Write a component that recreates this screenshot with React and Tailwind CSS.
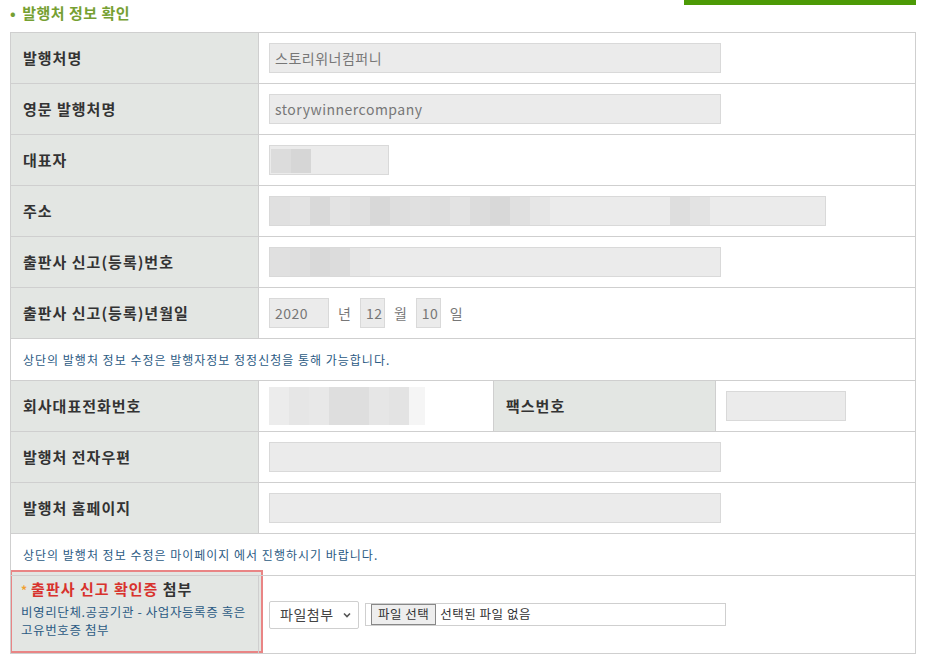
import React from 'react';

const font = { fontFamily: '"Noto Sans CJK KR", "Noto Sans", sans-serif' };

const Label = ({ children }) => (
  <td className="border border-[#cfcfcf] bg-[#e3e6e3] pl-3 text-[15px] font-bold tracking-[1px] text-[#333]">
    {children}
  </td>
);

const TextBox = ({ value = '', w = 'w-[452px]', children }) => (
  <div className={`relative h-[30px] ${w} overflow-hidden border border-[#d9d9d9] bg-[#ebebeb] px-[5px] text-[14px] leading-[28px] tracking-[0.5px] text-[#777]`}>
    {value}
    {children}
  </div>
);

// blurred (masked) text blocks
const Blur = ({ blocks }) => (
  <div className="absolute inset-0 flex">
    {blocks.map((c, i) => (
      <div key={i} className={`h-full w-[20px] ${c}`} />
    ))}
  </div>
);

const Note = ({ children }) => (
  <tr className="h-[42px]">
    <td colSpan={4} className="border border-[#cfcfcf] pl-3 text-[12px] tracking-[1px] text-[#2c5b84]">
      {children}
    </td>
  </tr>
);

export default function App() {
  return (
    <div className="relative h-[657px] w-[933px] overflow-hidden bg-white" style={font}>
      <div className="absolute left-[684px] top-0 h-[5px] w-[232px] bg-[#4c9a06]" />
      <div className="h-[32px] pl-[10px] pt-[2px] text-[15px] font-bold tracking-[0.5px] text-[#76a032]">
        <span className="mr-[6px]">•</span>발행처 정보 확인
      </div>
      <table className="ml-[10px] w-[906px] table-fixed border-collapse">
        <colgroup>
          <col className="w-[248px]" />
          <col className="w-[235px]" />
          <col className="w-[222px]" />
          <col />
        </colgroup>
        <tbody>
          <tr className="h-[51px]">
            <Label>발행처명</Label>
            <td colSpan={3} className="border border-[#cfcfcf] pl-[10px]">
              <TextBox value="스토리위너컴퍼니" />
            </td>
          </tr>
          <tr className="h-[51px]">
            <Label>영문 발행처명</Label>
            <td colSpan={3} className="border border-[#cfcfcf] pl-[10px]">
              <TextBox value="storywinnercompany" />
            </td>
          </tr>
          <tr className="h-[51px]">
            <Label>대표자</Label>
            <td colSpan={3} className="border border-[#cfcfcf] pl-[10px]">
              <TextBox w="w-[120px]">
                <div className="absolute left-[1px] top-[3px] flex h-[24px]">
                  <div className="w-[20px] bg-[#dcdcdc]" />
                  <div className="w-[20px] bg-[#d6d6d6]" />
                </div>
              </TextBox>
            </td>
          </tr>
          <tr className="h-[51px]">
            <Label>주소</Label>
            <td colSpan={3} className="border border-[#cfcfcf] pl-[10px]">
              <TextBox w="w-[557px]">
                <Blur
                  blocks={[
                    'bg-[#e0e0e0]', 'bg-[#e3e3e3]', 'bg-[#d9d9d9]', 'bg-[#e3e3e3]', 'bg-[#e0e0e0]',
                    'bg-[#d8d8d8]', 'bg-[#dedede]', 'bg-[#e0e0e0]', 'bg-[#dedede]', 'bg-[#e3e3e3]',
                    'bg-[#dcdcdc]', 'bg-[#d8d8d8]', 'bg-[#e0e0e0]', 'bg-[#e6e6e6]', 'bg-[#ebebeb]',
                    'bg-[#ebebeb]', 'bg-[#ebebeb]', 'bg-[#ebebeb]', 'bg-[#ebebeb]', 'bg-[#ebebeb]',
                    'bg-[#dedede]', 'bg-[#e3e3e3]',
                  ]}
                />
              </TextBox>
            </td>
          </tr>
          <tr className="h-[51px]">
            <Label>출판사 신고(등록)번호</Label>
            <td colSpan={3} className="border border-[#cfcfcf] pl-[10px]">
              <TextBox>
                <div className="absolute left-0 top-0 flex h-full">
                  <div className="w-[20px] bg-[#e0e0e0]" />
                  <div className="w-[20px] bg-[#dedede]" />
                  <div className="w-[20px] bg-[#d9d9d9]" />
                  <div className="w-[20px] bg-[#dcdcdc]" />
                  <div className="w-[20px] bg-[#e6e6e6]" />
                </div>
              </TextBox>
            </td>
          </tr>
          <tr className="h-[51px]">
            <Label>출판사 신고(등록)년월일</Label>
            <td colSpan={3} className="border border-[#cfcfcf] pl-[10px]">
              <div className="flex items-center text-[14px] text-[#777]">
                <TextBox value="2020" w="w-[60px]" />
                <span className="mx-[9px]">년</span>
                <TextBox value="12" w="w-[25px]" />
                <span className="mx-[9px]">월</span>
                <TextBox value="10" w="w-[25px]" />
                <span className="ml-[9px]">일</span>
              </div>
            </td>
          </tr>
          <Note>상단의 발행처 정보 수정은 발행자정보 정정신청을 통해 가능합니다.</Note>
          <tr className="h-[51px]">
            <Label>회사대표전화번호</Label>
            <td className="border border-[#cfcfcf] pl-[10px]">
              <div className="flex h-[38px]">
                <div className="w-[20px] bg-[#ececec]" />
                <div className="w-[20px] bg-[#e6e6e6]" />
                <div className="w-[20px] bg-[#e8e8e8]" />
                <div className="w-[20px] bg-[#dedede]" />
                <div className="w-[20px] bg-[#dedede]" />
                <div className="w-[20px] bg-[#e6e6e6]" />
                <div className="w-[20px] bg-[#e3e3e3]" />
                <div className="w-[16px] bg-[#f5f5f5]" />
              </div>
            </td>
            <Label>팩스번호</Label>
            <td className="border border-[#cfcfcf] pl-[10px]">
              <TextBox w="w-[120px]" />
            </td>
          </tr>
          <tr className="h-[51px]">
            <Label>발행처 전자우편</Label>
            <td colSpan={3} className="border border-[#cfcfcf] pl-[10px]">
              <TextBox />
            </td>
          </tr>
          <tr className="h-[51px]">
            <Label>발행처 홈페이지</Label>
            <td colSpan={3} className="border border-[#cfcfcf] pl-[10px]">
              <TextBox />
            </td>
          </tr>
          <Note>상단의 발행처 정보 수정은 마이페이지 에서 진행하시기 바랍니다.</Note>
          <tr className="h-[77px]">
            <td className="border border-[#cfcfcf] p-0 align-top">
              <div className="-ml-[1px] -mt-[6px] h-[83px] w-[253px] border-2 border-[#e98585] bg-[#e3e6e3] pl-[9px] pt-[5px]">
                <div className="text-[15px] font-bold leading-[24px] tracking-[1px]">
                  <span className="mr-[3px] text-[12px] text-[#f0a030]">*</span>
                  <span className="text-[#d8322c]">출판사 신고 확인증</span>
                  <span className="text-[#333]"> 첨부</span>
                </div>
                <div className="mt-[1px] text-[12.5px] leading-[18px] tracking-[0.6px] text-[#2c5b84]">
                  <div>비영리단체.공공기관 - 사업자등록증 혹은</div>
                  <div>고유번호증 첨부</div>
                </div>
              </div>
            </td>
            <td colSpan={3} className="border border-[#cfcfcf] pl-[10px]">
              <div className="flex items-center">
                <div className="flex h-[28px] w-[90px] items-center justify-between rounded-[2px] border border-[#cfcfcf] bg-white pl-[10px] pr-[6px] text-[14px] tracking-[0.5px] text-[#444]">
                  파일첨부
                  <svg width="10" height="10" viewBox="0 0 10 10">
                    <path d="M2 3.5 L5 6.5 L8 3.5" fill="none" stroke="#555" strokeWidth="1.6" />
                  </svg>
                </div>
                <div className="ml-[6px] flex h-[23px] w-[361px] items-center border border-[#cfcfcf] bg-white pl-[5px] text-[12.5px] tracking-[0.5px] text-[#333]">
                  <div className="flex h-[21px] items-center border border-[#888] bg-[#eeeeee] px-[6px]">
                    파일 선택
                  </div>
                  <span className="ml-[4px]">선택된 파일 없음</span>
                </div>
              </div>
            </td>
          </tr>
        </tbody>
      </table>
    </div>
  );
}
